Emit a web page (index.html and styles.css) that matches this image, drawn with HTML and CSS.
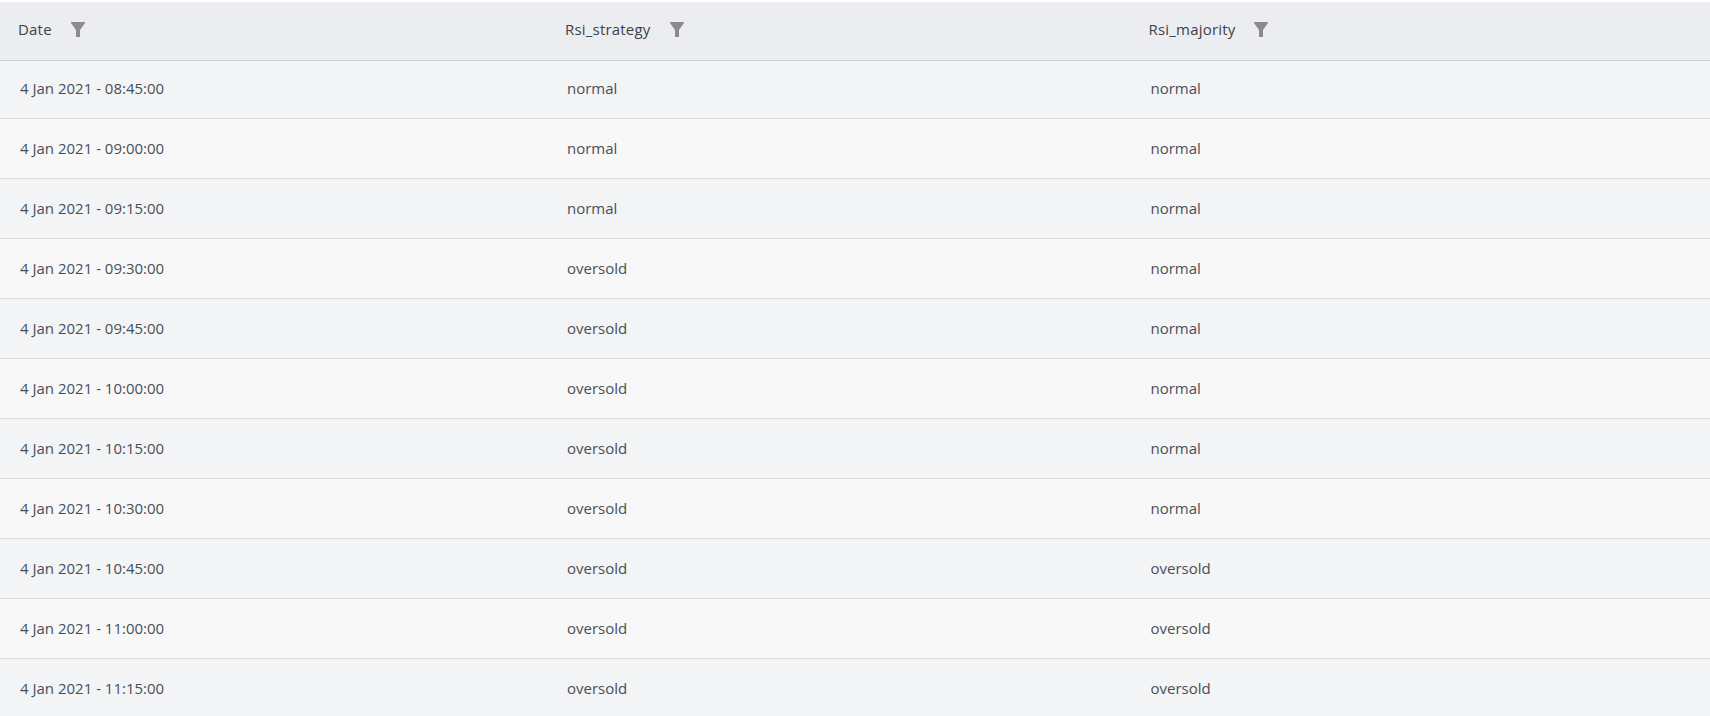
FILE: index.html
```html
<!DOCTYPE html>
<html lang="en">
<head>
<meta charset="utf-8">
<title>RSI table</title>
<link rel="stylesheet" href="styles.css">
</head>
<body>
<svg class="defs" width="0" height="0" aria-hidden="true"><symbol id="funnel" viewBox="0 0 14 15"><path d="M0 0H14V1L9 8V15H5V8L0 1Z"/></symbol></svg>
<div class="table">
  <div class="row head">
    <div class="cell"><span class="label">Date</span><svg class="filter"><use href="#funnel"/></svg></div>
    <div class="cell"><span class="label">Rsi_strategy</span><svg class="filter"><use href="#funnel"/></svg></div>
    <div class="cell"><span class="label">Rsi_majority</span><svg class="filter"><use href="#funnel"/></svg></div>
  </div>
  <div class="row"><div class="cell">4 Jan 2021 - 08:45:00</div><div class="cell">normal</div><div class="cell">normal</div></div>
  <div class="row"><div class="cell">4 Jan 2021 - 09:00:00</div><div class="cell">normal</div><div class="cell">normal</div></div>
  <div class="row"><div class="cell">4 Jan 2021 - 09:15:00</div><div class="cell">normal</div><div class="cell">normal</div></div>
  <div class="row"><div class="cell">4 Jan 2021 - 09:30:00</div><div class="cell">oversold</div><div class="cell">normal</div></div>
  <div class="row"><div class="cell">4 Jan 2021 - 09:45:00</div><div class="cell">oversold</div><div class="cell">normal</div></div>
  <div class="row"><div class="cell">4 Jan 2021 - 10:00:00</div><div class="cell">oversold</div><div class="cell">normal</div></div>
  <div class="row"><div class="cell">4 Jan 2021 - 10:15:00</div><div class="cell">oversold</div><div class="cell">normal</div></div>
  <div class="row"><div class="cell">4 Jan 2021 - 10:30:00</div><div class="cell">oversold</div><div class="cell">normal</div></div>
  <div class="row"><div class="cell">4 Jan 2021 - 10:45:00</div><div class="cell">oversold</div><div class="cell">oversold</div></div>
  <div class="row"><div class="cell">4 Jan 2021 - 11:00:00</div><div class="cell">oversold</div><div class="cell">oversold</div></div>
  <div class="row"><div class="cell">4 Jan 2021 - 11:15:00</div><div class="cell">oversold</div><div class="cell">oversold</div></div>
</div>
</body>
</html>
```
FILE: styles.css
```css
html, body {
  margin: 0;
  height: 716px;
  overflow: hidden;
  background: #fff;
}
.defs {
  position: absolute;
}
.table {
  padding-top: 2px;
  font-family: "Open Sans", sans-serif;
  font-size: 15px;
  color: #4a4f55;
}
.row {
  display: grid;
  grid-template-columns: 547px 583.5px 1fr;
  align-items: center;
  height: 59px;
  border-bottom: 1px solid #dcdcdc;
  background: #f8f8f8;
}
.row:nth-child(even) {
  background: #f3f4f6;
}
.row:nth-child(2) {
  height: 57px;
}
.row:nth-child(2) .cell {
  padding-bottom: 4px;
}
.row:last-child {
  height: 60px;
  border-bottom: 0;
}
.row.head {
  height: 58px;
  background: #ecedf1;
  border-bottom: 1px solid #cfd0d2;
  color: #3d4248;
}
.cell {
  padding: 0 0 2px 20px;
}
.head .cell {
  display: flex;
  align-items: center;
  gap: 19px;
  padding: 0 0 3px 18px;
}
.label {
  margin-bottom: 2px;
  letter-spacing: 0.2px;
}
.filter {
  width: 14px;
  height: 15px;
  fill: #8c8c8c;
}
```
